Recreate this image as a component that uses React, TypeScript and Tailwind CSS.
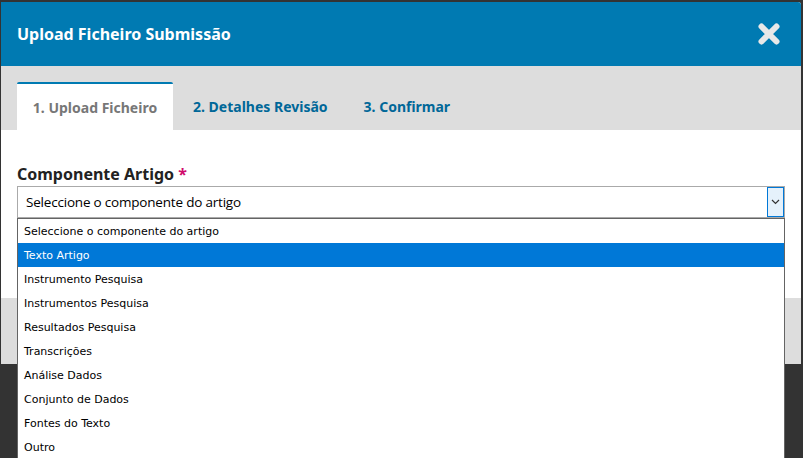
import React from "react";

const options = [
  "Seleccione o componente do artigo",
  "Texto Artigo",
  "Instrumento Pesquisa",
  "Instrumentos Pesquisa",
  "Resultados Pesquisa",
  "Transcrições",
  "Análise Dados",
  "Conjunto de Dados",
  "Fontes do Texto",
  "Outro",
];

const App = () => {
  const selected = 1;

  return (
    <div className="relative w-[803px] h-[458px] overflow-hidden bg-[#333] pt-[2px] pl-[1px] font-['Noto_Sans',sans-serif]">
      <div className="w-[800px] bg-white rounded-tr-[3px] overflow-hidden flex flex-col">
        {/* header */}
        <div className="h-[64px] bg-[#007ab2] px-4 flex items-center justify-between">
          <h2 className="text-white font-bold text-[16px]">Upload Ficheiro Submissão</h2>
          <svg width="24" height="24" viewBox="0 0 24 24" className="mr-[4px]">
            <path d="M4.5 4.5 L19.5 19.5 M19.5 4.5 L4.5 19.5" stroke="#e8e8e8" strokeWidth="6" strokeLinecap="round" />
          </svg>
        </div>

        {/* tabs */}
        <div className="h-[64px] bg-[#ddd] px-4 pt-4 flex items-end">
          <div className="h-[48px] w-[156px] bg-white border-t-2 border-[#007ab2] rounded-t-[2px] flex items-center justify-center text-[14px] font-bold text-[#777]">
            1. Upload Ficheiro
          </div>
          <div className="h-[48px] px-5 flex items-center text-[14px] font-bold text-[#006798]">
            2. Detalhes Revisão
          </div>
          <div className="h-[48px] px-[16px] flex items-center text-[14px] font-bold text-[#006798]">
            3. Confirmar
          </div>
        </div>

        {/* body */}
        <div className="h-[168px] px-4 pt-[32px]">
          <label className="block text-[16px] font-bold text-[#222] leading-[24px]">
            Componente Artigo <span className="text-[#d00a6c]">*</span>
          </label>
          <div className="h-[32px] border border-[#aaa] flex items-center justify-between pl-2">
            <span className="text-[13.5px] text-black font-['Open_Sans',sans-serif] tracking-[-0.2px]">
              Seleccione o componente do artigo
            </span>
            <div className="h-[30px] w-[17px] bg-[#e5f1fb] border border-[#0078d7] flex items-center justify-center">
              <svg width="9" height="6" viewBox="0 0 9 6">
                <path d="M1 1 L4.5 4.5 L8 1" stroke="#333" strokeWidth="1.2" fill="none" />
              </svg>
            </div>
          </div>
        </div>

        {/* footer */}
        <div className="h-[66px] bg-[#ddd]" />
      </div>

      {/* open select list */}
      <ul className="absolute left-[17px] top-[218px] w-[768px] bg-white border border-[#646464] font-['DejaVu_Sans',sans-serif] text-[11px] text-black">
        {options.map((opt, i) => (
          <li
            key={i}
            className={`h-[24px] flex items-center px-[6px] pt-[2px] ${i === selected ? "bg-[#0078d7] text-white" : ""}`}
          >
            {opt}
          </li>
        ))}
      </ul>
    </div>
  );
};

export default App;
